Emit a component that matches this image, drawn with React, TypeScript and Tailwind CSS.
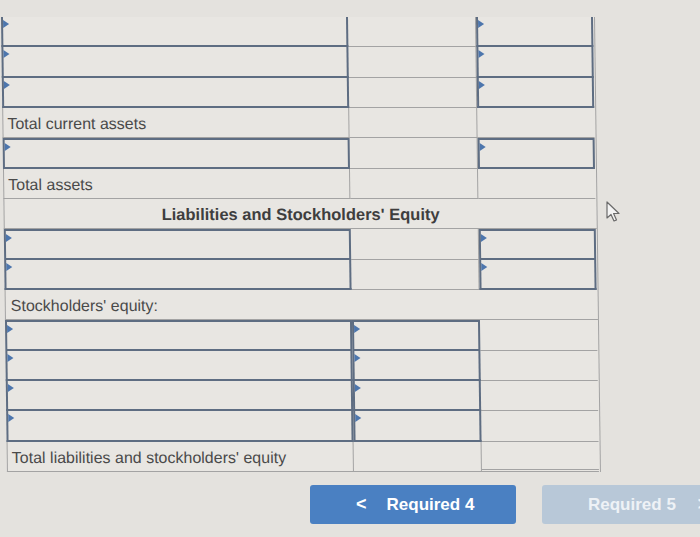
import React from 'react';

type Cell = 'input' | 'plain';

type Row =
  | { kind: 'cells'; label?: string; left: Cell; mid: Cell; right: Cell; last?: boolean }
  | { kind: 'full'; text: string; header?: boolean };

const rows: Row[] = [
  { kind: 'cells', left: 'input', mid: 'plain', right: 'input' },
  { kind: 'cells', left: 'input', mid: 'plain', right: 'input' },
  { kind: 'cells', left: 'input', mid: 'plain', right: 'input' },
  { kind: 'cells', label: 'Total current assets', left: 'plain', mid: 'plain', right: 'plain' },
  { kind: 'cells', left: 'input', mid: 'plain', right: 'input' },
  { kind: 'cells', label: 'Total assets', left: 'plain', mid: 'plain', right: 'plain' },
  { kind: 'full', text: "Liabilities and Stockholders' Equity", header: true },
  { kind: 'cells', left: 'input', mid: 'plain', right: 'input' },
  { kind: 'cells', left: 'input', mid: 'plain', right: 'input' },
  { kind: 'full', text: "Stockholders' equity:" },
  { kind: 'cells', left: 'input', mid: 'input', right: 'plain' },
  { kind: 'cells', left: 'input', mid: 'input', right: 'plain' },
  { kind: 'cells', left: 'input', mid: 'input', right: 'plain' },
  { kind: 'cells', left: 'input', mid: 'input', right: 'plain' },
  { kind: 'cells', label: "Total liabilities and stockholders' equity", left: 'plain', mid: 'plain', right: 'plain', last: true },
];

const widths = {
  left: 'w-[347px]',
  mid: 'w-[128px]',
  right: 'w-[117px]',
};

function colAbove(i: number, col: 'left' | 'mid' | 'right'): Cell | null {
  const prev = rows[i - 1];
  if (!prev || prev.kind !== 'cells') return null;
  return prev[col];
}

export default function App() {
  return (
    <div className="relative w-[700px] h-[537px] overflow-hidden bg-[#e4e2de] font-['Liberation_Sans',Arial,sans-serif] text-[#4a4a4a]">
      <div className="pt-[17px] pl-[1px]">
        <div className="w-[594px] origin-top skew-x-[0.75deg] border-r border-[#a3a3a3] bg-[#e8e6e2]">
          {rows.map((row, i) => {
            if (row.kind === 'full') {
              return (
                <div
                  key={i}
                  className={`h-[30.33px] flex items-center pt-[2px] border-b border-l border-[#a3a3a3] ${
                    row.header ? 'justify-center font-bold text-[16.5px] text-[#3e3e3e]' : 'pl-[5px] text-[16px]'
                  }`}
                >
                  {row.text}
                </div>
              );
            }
            return (
              <div key={i} className="h-[30.33px] flex">
                {(['left', 'mid', 'right'] as const).map((col) => {
                  const kind = row[col];
                  if (kind === 'input') {
                    const above = colAbove(i, col);
                    const noTop = i === 0 || above === 'input';
                    return (
                      <div
                        key={col}
                        className={`${widths[col]} relative h-full border-x-2 border-b-2 border-[#5e6d82] ${
                          noTop ? 'border-t-0' : 'border-t-2'
                        }`}
                      >
                        <span className="absolute left-0 top-[3px] w-0 h-0 border-y-[4px] border-y-transparent border-l-[6px] border-l-[#4d76ad]" />
                      </div>
                    );
                  }
                  return (
                    <div
                      key={col}
                      className={`${widths[col]} h-full flex items-center ${
                        col === 'left' ? 'border-l pl-[4px] pt-[3px] text-[16px] whitespace-nowrap' : ''
                      } ${col !== 'right' ? 'border-r' : ''} border-[#a3a3a3] ${
                        row.last && col === 'right' ? 'border-b-[3px] border-double' : 'border-b'
                      }`}
                    >
                      {col === 'left' ? row.label : null}
                    </div>
                  );
                })}
              </div>
            );
          })}
        </div>
      </div>

      <div className="mt-[13px] flex">
        <button className="ml-[310px] w-[206px] shrink-0 h-[39px] rounded-[3px] bg-[#4a80c2] text-white font-bold text-[17px] flex items-center">
          <span className="ml-[46px] mr-[20px] text-[18px]">&lt;</span>
          Required 4
        </button>
        <button className="ml-[26px] w-[170px] shrink-0 h-[39px] rounded-[3px] bg-[#b8c8d8] text-[#eef2f6] font-bold text-[17px] flex items-center">
          <span className="ml-[46px]">Required 5</span>
          <span className="ml-[22px] text-[18px]">&gt;</span>
        </button>
      </div>

      <svg className="absolute left-[606px] top-[201px]" width="16" height="22" viewBox="0 0 16 22">
        <path
          d="M1 1 L1 17 L5 13.5 L8 20 L10.5 19 L7.6 12.5 L13 12.5 Z"
          fill="#f4f4f4"
          stroke="#6a6a6a"
          strokeWidth="1.2"
          strokeLinejoin="round"
        />
      </svg>
    </div>
  );
}
